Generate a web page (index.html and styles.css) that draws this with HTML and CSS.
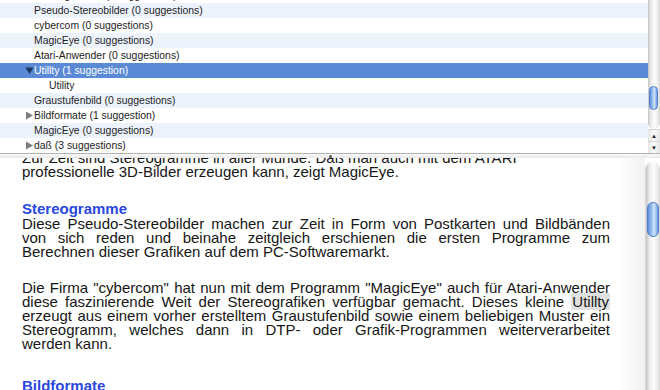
FILE: index.html
```html
<!DOCTYPE html>
<html lang="de">
<head>
    <meta charset="UTF-8">
    <title>Rechtschreibung</title>
    <link rel="stylesheet" href="styles.css">
</head>
<body>

<div class="window">
    <div class="outline">
        <div class="rows">
            <div class="row">Stereogramme (0 suggestions)</div>
            <div class="row stripe">Pseudo-Stereobilder (0 suggestions)</div>
            <div class="row">cybercom (0 suggestions)</div>
            <div class="row stripe">MagicEye (0 suggestions)</div>
            <div class="row">Atari-Anwender (0 suggestions)</div>
            <div class="row parent selected">
                <svg class="twisty" width="9" height="9" viewBox="0 0 9 9"><polygon points="0.5,1.5 8.5,1.5 4.5,8"/></svg>Utillty (1 suggestion)
            </div>
            <div class="row child">Utility</div>
            <div class="row stripe">Graustufenbild (0 suggestions)</div>
            <div class="row parent">
                <svg class="twisty" width="9" height="9" viewBox="0 0 9 9"><polygon points="1,0.5 8,4.5 1,8.5"/></svg>Bildformate (1 suggestion)
            </div>
            <div class="row stripe">MagicEye (0 suggestions)</div>
            <div class="row parent">
                <svg class="twisty" width="9" height="9" viewBox="0 0 9 9"><polygon points="1,0.5 8,4.5 1,8.5"/></svg>daß (3 suggestions)
            </div>
        </div>
        <div class="scroller outline-scroll">
            <div class="track"><div class="thumb"></div></div>
            <div class="arrow">&#9650;</div>
            <div class="arrow">&#9660;</div>
        </div>
    </div>

    <div class="splitter"><span class="dimple"></span></div>

    <div class="doc">
        <div class="page">
            <div class="text">
                <p><span class="ln">Zur Zeit sind Stereogramme in aller Munde. Daß man auch mit dem ATARI</span>professionelle 3D-Bilder erzeugen kann, zeigt MagicEye.</p>

                <h2>Stereogramme</h2>
                <p>
                    <span class="ln jl">Diese Pseudo-Stereobilder machen zur Zeit in Form von Postkarten und Bildbänden</span>
                    <span class="ln jl">von sich reden und beinahe zeitgleich erschienen die ersten Programme zum</span>
                    Berechnen dieser Grafiken auf dem PC-Softwaremarkt.
                </p>
                <p>
                    <span class="ln jl">Die Firma "cybercom" hat nun mit dem Programm "MagicEye" auch für Atari-Anwender</span>
                    <span class="ln jl">diese faszinierende Weit der Stereografiken verfügbar gemacht. Dieses kleine <mark>Utillty</mark></span>
                    <span class="ln jl">erzeugt aus einem vorher erstelltem Graustufenbild sowie einem beliebigen Muster ein</span>
                    <span class="ln jl">Stereogramm, welches dann in DTP- oder Grafik-Programmen weiterverarbeitet</span>
                    werden kann.
                </p>

                <h2 class="next">Bildformate</h2>
                <p>Neben den Standardformaten werden auch weitere Bildformate unterstützt.</p>
            </div>
        </div>
        <div class="scroller doc-scroll">
            <div class="track"><div class="thumb"></div></div>
        </div>
    </div>
</div>

</body>
</html>
```

FILE: styles.css
```css
* {
    box-sizing: border-box;
}
body {
    margin: 0;
    background-color: #fff;
}
.window {
    width: 660px;
    height: 390px;
    overflow: hidden;
    display: flex;
    flex-direction: column;
    font-family: "Liberation Sans", Arial, sans-serif;
    color: #161616;
}

/* outline of misspelled words */
.outline {
    height: 153px;
    flex: none;
    display: flex;
    overflow: hidden;
}
.rows {
    flex: 1;
    margin-top: -12px;
    font-size: 10.4px;
    color: #1d1d1d;
}
.row {
    height: 15px;
    display: flex;
    align-items: center;
    padding-left: 34px;
    white-space: nowrap;
}
.row.stripe {
    background-color: #edf3fd;
}
.row.parent {
    padding-left: 25px;
}
.row.child {
    padding-left: 49px;
}
.row.selected {
    background-color: #5a8ad6;
    color: #fff;
}
.twisty {
    width: 9px;
    height: 9px;
    fill: #7c7c7c;
    flex: none;
}
.selected .twisty {
    fill: #1f3763;
}

/* scrollbars */
.scroller {
    width: 12px;
    flex: none;
    display: flex;
    flex-direction: column;
    background-color: #fff;
}
.track {
    flex: 1;
    background: linear-gradient(to right, #c4c4c4 0, #ececec 25%, #fdfdfd 55%, #e6e6e6 90%, #d0d0d0 100%);
}
.thumb {
    width: 9px;
    margin-left: 1px;
    border: 1px solid #4d7dcb;
    border-radius: 5px;
    background: linear-gradient(to right, #5d8fdc 0, #a9ccf4 45%, #d6e8fb 60%, #6b9be2 100%);
}
.outline-scroll .track {
    border-radius: 0 0 6px 6px;
}
.outline-scroll .thumb {
    height: 24px;
    margin-top: 86px;
}
.arrow {
    height: 12px;
    font-size: 6px;
    line-height: 12px;
    text-align: center;
    color: #222;
    border-top: 1px solid #d6d6d6;
    background: linear-gradient(to right, #e4e4e4, #fbfbfb 50%, #e4e4e4);
}
.doc-scroll {
    width: 15px;
    padding-top: 4px;
}
.doc-scroll .track {
    border-radius: 7px 7px 0 0;
    border-left: 1px solid #dadada;
}
.doc-scroll .thumb {
    width: 12px;
    height: 35px;
    margin-top: 40px;
    margin-left: 1px;
    border-radius: 6px;
}

/* splitter */
.splitter {
    height: 5px;
    flex: none;
    display: flex;
    justify-content: center;
    align-items: center;
    border-top: 1px solid #b3b3b3;
    background: linear-gradient(#fafafa, #e9e9e9);
}
.dimple {
    width: 3px;
    height: 3px;
    border-radius: 50%;
    background-color: #555;
}

/* document text */
.doc {
    flex: 1;
    display: flex;
    overflow: hidden;
}
.page {
    flex: 1;
    padding: 0 35px 0 22px;
    overflow: hidden;
    background: linear-gradient(to right, #fff 96%, #f1f1f1 100%);
}
.text {
    margin-top: -7px;
    font-size: 15px;
    line-height: 14px;
    text-align: justify;
}
.text p {
    margin: 0 0 22px 0;
}
.text h2 {
    margin: 0;
    font-size: 15px;
    line-height: 16px;
    color: #2a48de;
}
.text h2.next {
    margin-top: 27px;
}
.ln {
    display: block;
    text-align: left;
}
.ln.jl {
    text-align: justify;
    text-align-last: justify;
}
mark {
    background-color: #e1e1e1;
    color: inherit;
    padding: 0 1px;
}
```
